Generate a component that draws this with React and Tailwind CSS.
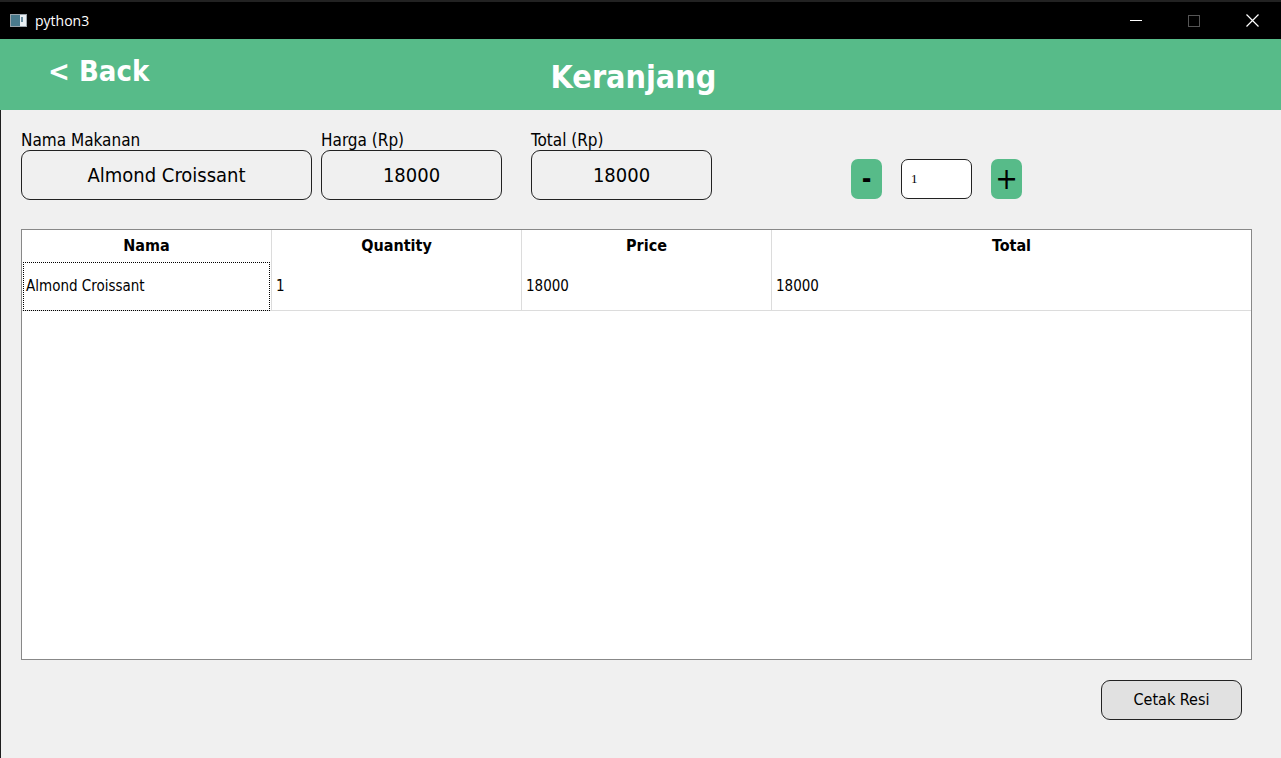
import React from 'react'

function TitleBar() {
  return (
    <div className="h-[39px] bg-black border-t-2 border-[#222] flex items-center text-white shrink-0">
      <svg width="17" height="13" viewBox="0 0 17 13" className="ml-[10px]">
        <rect x="0.5" y="0.5" width="16" height="12" fill="#e8eef2" stroke="#9aa4ab" />
        <rect x="1" y="1" width="9" height="11" fill="#4a7a8c" />
        <rect x="11" y="3" width="2" height="5" fill="#6a8fa0" />
      </svg>
      <span className="ml-[8px] text-[14px] font-['Open_Sans',sans-serif]">python3</span>
      <div className="ml-auto flex items-center h-full">
        <div className="w-[58px] h-full flex items-center justify-center">
          <div className="w-[12px] h-px bg-white" />
        </div>
        <div className="w-[58px] h-full flex items-center justify-center">
          <div className="w-[12px] h-[12px] border border-[#555]" />
        </div>
        <div className="w-[58px] h-full flex items-center justify-center">
          <svg width="13" height="13" viewBox="0 0 13 13">
            <path d="M0.5 0.5 L12.5 12.5 M12.5 0.5 L0.5 12.5" stroke="white" strokeWidth="1.2" />
          </svg>
        </div>
      </div>
    </div>
  )
}

function Field({ label, value, width }) {
  return (
    <div className="flex flex-col" style={{ width }}>
      <span className="text-[17px] leading-[19px] text-black">{label}</span>
      <div className="h-[50px] border border-[#222] rounded-[9px] flex items-center justify-center text-[20px] text-black">
        {value}
      </div>
    </div>
  )
}

export default function App() {
  const cols = ['Nama', 'Quantity', 'Price', 'Total']
  const row = ['Almond Croissant', '1', '18000', '18000']
  return (
    <div className="w-[1281px] h-[758px] flex flex-col bg-[#f0f0f0] font-['DejaVu_Sans_Condensed','DejaVu_Sans',sans-serif] overflow-hidden">
      <TitleBar />
      <div className="h-[71px] bg-[#57bb89] flex items-center relative shrink-0 text-white font-bold">
        <span className="ml-[48px] text-[29px] mb-[6px]">&lt; Back</span>
        <span className="absolute left-0 right-0 text-center text-[32px] top-[14px] pr-[14px]">Keranjang</span>
      </div>
      <div className="flex-1 border-l border-[#1e1e1e] pl-[20px] pt-[21px] flex flex-col">
        <div className="flex items-end">
          <Field label="Nama Makanan" value="Almond Croissant" width={291} />
          <div className="w-[9px]" />
          <Field label="Harga (Rp)" value="18000" width={181} />
          <div className="w-[29px]" />
          <Field label="Total (Rp)" value="18000" width={181} />
          <div className="w-[139px]" />
          <div className="flex items-center gap-[19px] mb-px">
            <button className="w-[31px] h-[40px] bg-[#57bb89] rounded-[7px] text-[26px] font-bold text-black leading-none">-</button>
            <div className="w-[71px] h-[40px] bg-white border border-[#222] rounded-[7px] flex items-center pl-[9px] text-[13px] font-['Liberation_Serif',serif] text-black">1</div>
            <button className="w-[31px] h-[40px] bg-[#57bb89] rounded-[7px] text-[30px] font-light text-black leading-none">+</button>
          </div>
        </div>
        <div className="mt-[29px] w-[1231px] h-[431px] border border-[#888] bg-white flex flex-col">
          <div className="flex h-[32px]">
            {cols.map((c, i) => (
              <div
                key={c}
                className={`${i === 3 ? 'flex-1' : 'w-[250px] border-r border-[#dcdcdc]'} flex items-center justify-center text-[16px] font-bold text-black`}
              >
                {c}
              </div>
            ))}
          </div>
          <div className="flex h-[49px] border-b border-[#dcdcdc]">
            {row.map((v, i) => (
              <div
                key={i}
                className={`${i === 3 ? 'flex-1' : 'w-[250px] border-r border-[#dcdcdc]'} flex items-center pl-[4px] text-[15px] text-black`}
              >
                {i === 0 ? (
                  <div className="w-[247px] h-[49px] -ml-[3px] border border-dotted border-black flex items-center pl-[2px]">
                    {v}
                  </div>
                ) : (
                  v
                )}
              </div>
            ))}
          </div>
        </div>
        <div className="flex justify-end pr-[39px] mt-[20px]">
          <button className="w-[141px] h-[40px] bg-[#e1e1e1] border border-[#222] rounded-[9px] text-[16px] text-black">
            Cetak Resi
          </button>
        </div>
      </div>
    </div>
  )
}
